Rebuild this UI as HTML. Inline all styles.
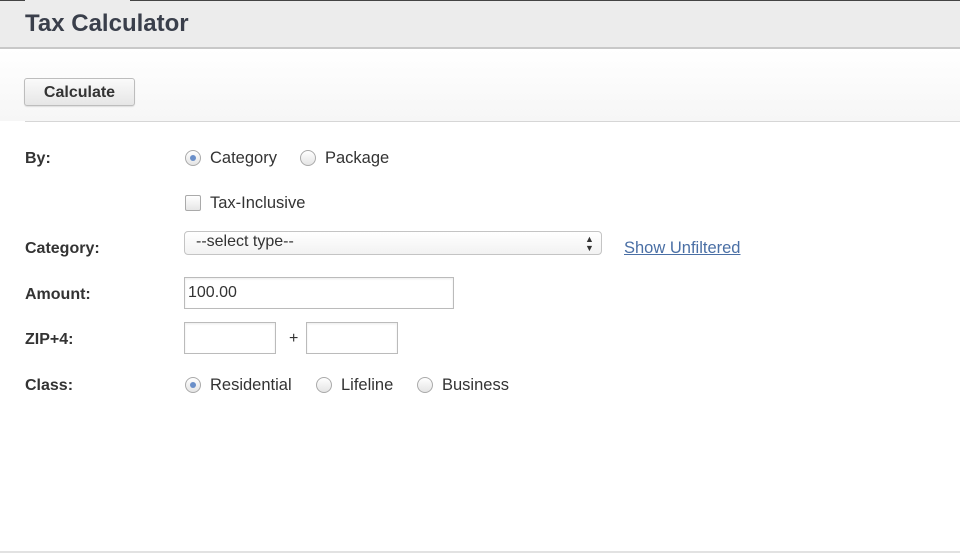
<!DOCTYPE html>
<html><head><style>
body{margin:0;width:960px;height:553px;overflow:hidden;background:#fff;font-family:"Liberation Sans",sans-serif;color:#333;position:relative}
.a{position:absolute}
.hdr{left:0;top:0;width:960px;height:47px;background:#ececec;border-bottom:2px solid #c8c8c8}
.title{left:25px;top:10px;font-size:24px;font-weight:bold;color:#3a3f4b}
.btn{left:24px;top:78px;width:109px;height:26px;border:1px solid #bdbdbd;border-radius:3px;background:linear-gradient(#fafafa,#e6e6e6);font-size:16px;font-weight:bold;color:#333;text-align:center;line-height:27px;box-shadow:0 1px 1px rgba(0,0,0,.1)}
.lbl{left:25px;font-size:16px;font-weight:bold;color:#333}
.t{font-size:16.5px;color:#333}
.rad{width:14px;height:14px;border:1px solid #aaa;border-radius:50%;background:linear-gradient(#fff,#e4e4e4)}
.rad.on::after{content:"";position:absolute;left:4px;top:4px;width:6px;height:6px;border-radius:50%;background:#6a8fc9}
.inp{border:1px solid #bbb;background:#fff;box-shadow:inset 0 1px 2px rgba(0,0,0,.08)}
</style></head><body>
<div class="a hdr"></div>
<div class="a" style="left:0;top:0;width:960px;height:1px;background:#444"></div>
<div class="a" style="left:25px;top:0;width:105px;height:2px;background:#ececec"></div>
<div class="a title">Tax Calculator</div>
<div class="a" style="left:0;top:49px;width:960px;height:72px;background:linear-gradient(#fff,#f6f6f6)"></div>
<div class="a btn">Calculate</div>
<div class="a" style="left:25px;top:121px;width:935px;height:1px;background:#d6d6d6"></div>

<div class="a lbl" style="top:150px">By:</div>
<div class="a rad on" style="left:185px;top:150px"></div>
<div class="a t" style="left:210px;top:149px">Category</div>
<div class="a rad" style="left:300px;top:150px"></div>
<div class="a t" style="left:325px;top:149px">Package</div>

<div class="a" style="left:185px;top:195px;width:14px;height:14px;border:1px solid #aaa;border-radius:2px;background:linear-gradient(#fff,#e6e6e6)"></div>
<div class="a t" style="left:210px;top:194px">Tax-Inclusive</div>

<div class="a lbl" style="top:240px">Category:</div>
<div class="a" style="left:184px;top:231px;width:416px;height:22px;border:1px solid #c4c4c4;border-radius:4px;background:linear-gradient(#fff,#f2f2f2)"></div>
<div class="a t" style="left:196px;top:233px;font-size:16px">--select type--</div>
<div class="a" style="left:585px;top:235px;font-size:9px;line-height:9px;color:#333">▲<br>▼</div>
<div class="a" style="left:624px;top:239px;font-size:16.5px;color:#4a6fa5;text-decoration:underline">Show Unfiltered</div>

<div class="a lbl" style="top:286px">Amount:</div>
<div class="a inp" style="left:184px;top:277px;width:268px;height:30px"></div>
<div class="a t" style="left:188px;top:284px;font-size:16px">100.00</div>

<div class="a lbl" style="top:331px">ZIP+4:</div>
<div class="a inp" style="left:184px;top:322px;width:90px;height:30px"></div>
<div class="a t" style="left:289px;top:330px;font-size:16px">+</div>
<div class="a inp" style="left:306px;top:322px;width:90px;height:30px"></div>

<div class="a lbl" style="top:377px">Class:</div>
<div class="a rad on" style="left:185px;top:377px"></div>
<div class="a t" style="left:210px;top:376px">Residential</div>
<div class="a rad" style="left:316px;top:377px"></div>
<div class="a t" style="left:341px;top:376px">Lifeline</div>
<div class="a rad" style="left:417px;top:377px"></div>
<div class="a t" style="left:442px;top:376px">Business</div>

<div class="a" style="left:0;top:551px;width:960px;height:2px;background:#e2e2e2"></div>
</body></html>
